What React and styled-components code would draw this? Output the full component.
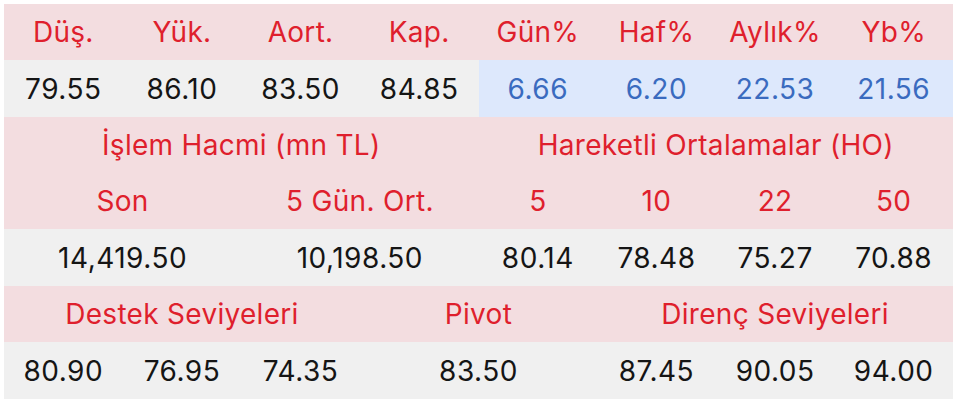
import styled, { createGlobalStyle } from 'styled-components';

const GlobalStyle = createGlobalStyle`
  body {
    margin: 0;
    background: #ffffff;
    font-family: Inter, "Open Sans", sans-serif;
  }
`;

export const StatsTable = styled.div`
  display: grid;
  grid-template-columns: repeat(8, 1fr);
  width: 949px;
  margin: 4px 0 0 4px;
`;

export const Cell = styled.div`
  grid-column: span ${({ $span }) => $span || 1};
  height: ${({ $kind }) => ($kind === 'head' ? '56px' : '57px')};
  display: flex;
  align-items: center;
  justify-content: center;
  font-size: 28px;
  letter-spacing: ${({ $kind }) => ($kind === 'head' ? '0.3px' : '0.5px')};
  background: ${({ $kind }) =>
    $kind === 'head' ? '#f3dde0' : $kind === 'blue' ? '#dde8fc' : '#f0f0f0'};
  color: ${({ $kind }) =>
    $kind === 'head' ? '#df1f2d' : $kind === 'blue' ? '#3a6bbf' : '#151515'};
`;

const topHeads = ['Düş.', 'Yük.', 'Aort.', 'Kap.', 'Gün%', 'Haf%', 'Aylık%', 'Yb%'];
const topValues = ['79.55', '86.10', '83.50', '84.85'];
const topChanges = ['6.66', '6.20', '22.53', '21.56'];

const volumeRow = [
  { text: 'Son', span: 2 },
  { text: '5 Gün. Ort.', span: 2 },
  { text: '5' },
  { text: '10' },
  { text: '22' },
  { text: '50' },
];

const volumeValues = [
  { text: '14,419.50', span: 2 },
  { text: '10,198.50', span: 2 },
  { text: '80.14' },
  { text: '78.48' },
  { text: '75.27' },
  { text: '70.88' },
];

const levelValues = [
  { text: '80.90' },
  { text: '76.95' },
  { text: '74.35' },
  { text: '83.50', span: 2 },
  { text: '87.45' },
  { text: '90.05' },
  { text: '94.00' },
];

export default function App() {
  return (
    <>
      <GlobalStyle />
      <StatsTable>
        {topHeads.map(h => (
          <Cell key={h} $kind="head">
            {h}
          </Cell>
        ))}
        {topValues.map(v => (
          <Cell key={v}>{v}</Cell>
        ))}
        {topChanges.map(v => (
          <Cell key={v} $kind="blue">
            {v}
          </Cell>
        ))}

        <Cell $kind="head" $span={4}>
          İşlem Hacmi (mn TL)
        </Cell>
        <Cell $kind="head" $span={4}>
          Hareketli Ortalamalar (HO)
        </Cell>
        {volumeRow.map(c => (
          <Cell key={c.text} $kind="head" $span={c.span}>
            {c.text}
          </Cell>
        ))}
        {volumeValues.map(c => (
          <Cell key={c.text} $span={c.span}>
            {c.text}
          </Cell>
        ))}

        <Cell $kind="head" $span={3}>
          Destek Seviyeleri
        </Cell>
        <Cell $kind="head" $span={2}>
          Pivot
        </Cell>
        <Cell $kind="head" $span={3}>
          Direnç Seviyeleri
        </Cell>
        {levelValues.map(c => (
          <Cell key={c.text} $span={c.span}>
            {c.text}
          </Cell>
        ))}
      </StatsTable>
    </>
  );
}
